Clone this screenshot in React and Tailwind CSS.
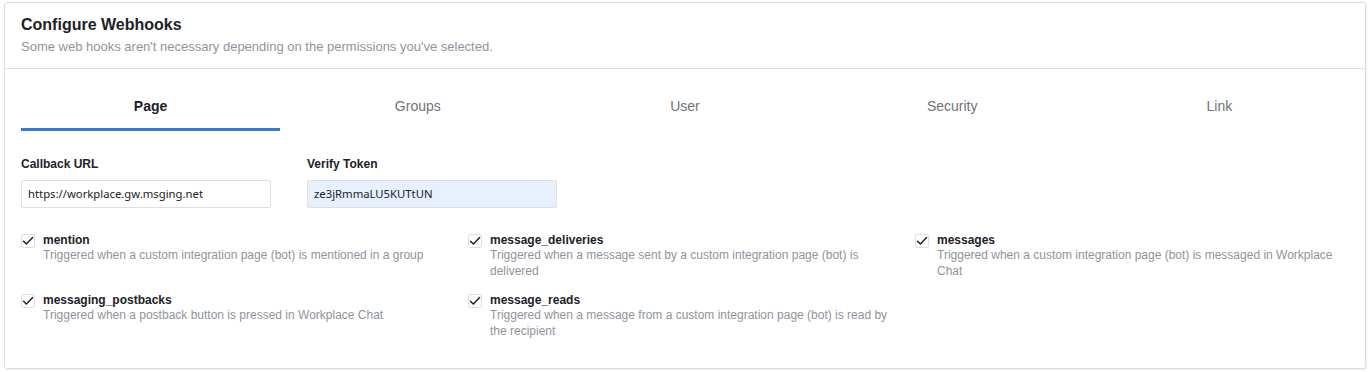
import React from "react";

const tabs = ["Page", "Groups", "User", "Security", "Link"];

const hooks = [
  { name: "mention", desc: "Triggered when a custom integration page (bot) is mentioned in a group" },
  { name: "message_deliveries", desc: "Triggered when a message sent by a custom integration page (bot) is delivered" },
  { name: "messages", desc: "Triggered when a custom integration page (bot) is messaged in Workplace Chat" },
  { name: "messaging_postbacks", desc: "Triggered when a postback button is pressed in Workplace Chat" },
  { name: "message_reads", desc: "Triggered when a message from a custom integration page (bot) is read by the recipient" },
];

function Check() {
  return (
    <div className="mt-[2px] flex h-[14px] w-[14px] shrink-0 items-center justify-center rounded-[2px] border border-[#dddfe2] bg-white">
      <svg width="12" height="12" viewBox="0 0 12 12" fill="none">
        <polyline points="1.5,6.2 4.4,9 10.6,2.6" stroke="#1d2129" strokeWidth="1.5" strokeLinecap="round" strokeLinejoin="round" />
      </svg>
    </div>
  );
}

export default function App() {
  return (
    <div className="bg-white pl-[4px] pr-[5px] pt-[2px] pb-[3px]" style={{ fontFamily: '"Liberation Sans", Arial, sans-serif' }}>
      <div className="rounded-[3px] border border-[#dddfe2] bg-white shadow-[1px_1px_1px_rgba(0,0,0,0.06)]">
        <div className="border-b border-[#dddfe2] px-4 pt-[12px] pb-[13px]">
          <div className="text-[16px] font-bold leading-[20px] text-[#1d2129]">Configure Webhooks</div>
          <div className="mt-[4px] text-[13px] leading-[16px] text-[#90949c]">
            Some web hooks aren't necessary depending on the permissions you've selected.
          </div>
        </div>
        <div className="px-4 pt-[16px] pb-[29px]">
          <div className="flex gap-2">
            {tabs.map((t, i) => (
              <div
                key={t}
                className={
                  i === 0
                    ? "flex h-[46px] flex-1 items-center justify-center border-b-[3px] border-[#3578e5] text-[14px] font-bold text-[#1d2129]"
                    : "flex h-[46px] flex-1 items-center justify-center border-b-[3px] border-transparent text-[14px] text-[#707378]"
                }
              >
                {t}
              </div>
            ))}
          </div>
          <div className="mt-[25px] flex gap-[36px]">
            <div className="w-[250px]">
              <div className="text-[12px] font-bold leading-[16px] text-[#1d2129]">Callback URL</div>
              <div
                className="mt-[8px] flex h-[28px] items-center rounded-[2px] border border-[#dddfe2] bg-white px-[6px] text-[11.3px] text-[#1d2129]"
                style={{ fontFamily: '"Noto Sans", "Open Sans", sans-serif' }}
              >
                https://workplace.gw.msging.net
              </div>
            </div>
            <div className="w-[250px]">
              <div className="text-[12px] font-bold leading-[16px] text-[#1d2129]">Verify Token</div>
              <div
                className="mt-[8px] flex h-[28px] items-center rounded-[2px] border border-[#dddfe2] bg-[#e8f0fe] px-[6px] text-[11.3px] text-[#1d2129]"
                style={{ fontFamily: '"Noto Sans", "Open Sans", sans-serif' }}
              >
                ze3jRmmaLU5KUTtUN
              </div>
            </div>
          </div>
          <div className="mt-[24px] grid grid-cols-[434px_434px_434px] gap-x-[13px] gap-y-[13px]">
            {hooks.map((h) => (
              <div key={h.name} className="flex gap-[8px]">
                <Check />
                <div className="pr-[8px]">
                  <div className="text-[12px] font-bold leading-[16px] text-[#1d2129]">{h.name}</div>
                  <div className="text-[12px] leading-[15.5px] text-[#90949c]">{h.desc}</div>
                </div>
              </div>
            ))}
          </div>
        </div>
      </div>
    </div>
  );
}
